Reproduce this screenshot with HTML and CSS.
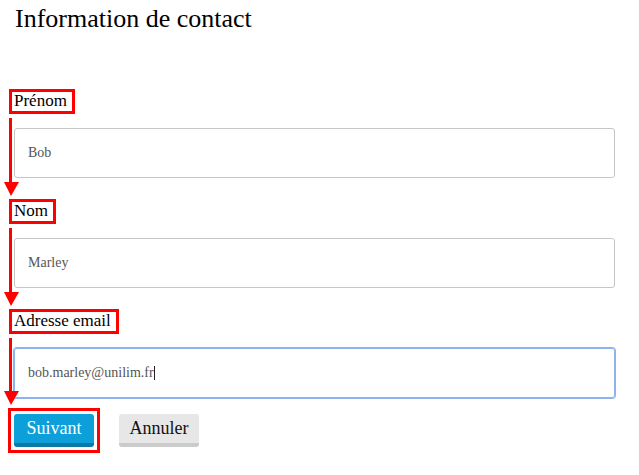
FILE: index.html
```html
<!DOCTYPE html>
<html lang="fr">
<head>
<meta charset="utf-8">
<title>Information de contact</title>
<link rel="stylesheet" href="styles.css">
</head>
<body>
<h1 class="title">Information de contact</h1>
<form class="form">
  <div class="field">
    <label class="label-box">Prénom</label>
    <div class="input" role="textbox">Bob</div>
    <div class="arrow"><span class="arrow-line"></span><span class="arrow-head"></span></div>
  </div>
  <div class="field">
    <label class="label-box">Nom</label>
    <div class="input" role="textbox">Marley</div>
    <div class="arrow"><span class="arrow-line"></span><span class="arrow-head"></span></div>
  </div>
  <div class="field field-last">
    <label class="label-box">Adresse email</label>
    <div class="input input-focus" role="textbox">bob.marley@unilim.fr<span class="caret"></span></div>
    <div class="arrow"><span class="arrow-line"></span><span class="arrow-head"></span></div>
  </div>
  <div class="actions">
    <div class="hl-box"><button type="button" class="btn btn-primary">Suivant</button></div>
    <button type="button" class="btn btn-default">Annuler</button>
  </div>
</form>
</body>
</html>
```
FILE: styles.css
```css
html, body {
  margin: 0;
  padding: 0;
  background: #fff;
}
body {
  font-family: "Liberation Serif", "Times New Roman", serif;
  color: #000;
  width: 639px;
}
.title {
  font-size: 26px;
  font-weight: normal;
  line-height: 30px;
  margin: 4px 0 0 15px;
}
.form {
  margin-top: 55px;
  padding-left: 9px;
  width: 606px;
}
.field {
  position: relative;
  display: flex;
  flex-direction: column;
  align-items: flex-start;
  padding-bottom: 21px;
}
.field-last {
  padding-bottom: 10px;
}
.label-box {
  display: block;
  border: 3px solid #f00;
  font-size: 17px;
  line-height: 18px;
  padding: 0 5px 1px 2px;
}
.input {
  box-sizing: border-box;
  margin-top: 14px;
  margin-left: 5px;
  width: 601px;
  height: 50px;
  border: 1px solid #c6c6c6;
  border-radius: 3px;
  padding-left: 13px;
  font-size: 14px;
  line-height: 48px;
  color: #555;
  display: flex;
  align-items: center;
}
.input-focus {
  border-color: #8db2ee;
  box-shadow: 0 0 0 1px #8db2ee;
}
.caret {
  display: inline-block;
  width: 1px;
  height: 14px;
  background: #222;
  margin-left: 0;
}
.arrow {
  position: absolute;
  left: -5px;
  top: 29px;
  bottom: 3px;
  width: 15px;
  display: flex;
  flex-direction: column;
  align-items: flex-start;
}
.arrow-line {
  flex: 1;
  width: 3px;
  margin-left: 5px;
  background: #f00;
}
.arrow-head {
  width: 0;
  height: 0;
  border-left: 7px solid transparent;
  border-right: 8px solid transparent;
  border-top: 14px solid #f00;
}
.actions {
  display: flex;
  align-items: center;
  gap: 19px;
  margin-left: -1px;
}
.hl-box {
  border: 3px solid #f00;
  padding: 3px;
  display: flex;
}
.btn {
  box-sizing: border-box;
  width: 80px;
  height: 33px;
  border: 0;
  border-radius: 3px;
  font-family: "Liberation Serif", "Times New Roman", serif;
  font-size: 18px;
  line-height: 29px;
  padding: 0;
  margin: 0;
  text-align: center;
}
.btn-primary {
  background: #0c9fd9;
  border-bottom: 4px solid #0b78a5;
  color: #fff;
}
.btn-default {
  background: #e7e7e7;
  border-bottom: 4px solid #cbcbcb;
  color: #111;
}
```
